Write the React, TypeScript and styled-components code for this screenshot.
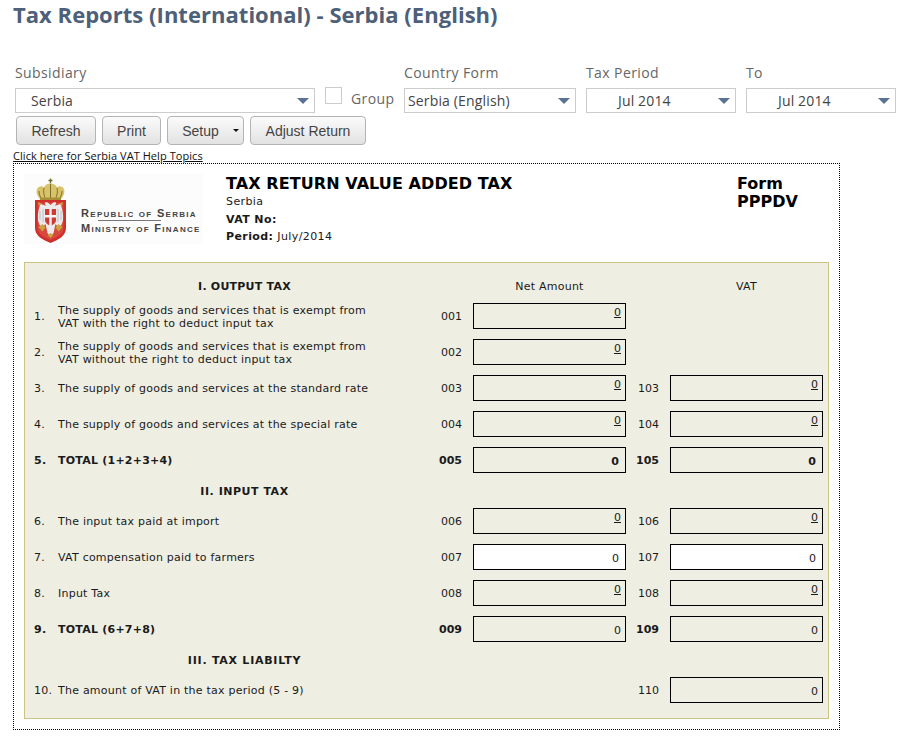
import React, { FC } from 'react';
import styled, { createGlobalStyle } from 'styled-components';

const GlobalStyle = createGlobalStyle`
  html, body {
    margin: 0;
    padding: 0;
    background: #fff;
  }
`;

const Page = styled.div`
  width: 904px;
  height: 741px;
  padding: 0 0 0 13px;
  box-sizing: border-box;
  font-family: "Open Sans", sans-serif;
`;

const Title = styled.h1`
  margin: 0;
  height: 61px;
  font-size: 22px;
  line-height: 27.98px;
  letter-spacing: 0.03px;
  font-weight: 700;
  color: #4d5f79;
`;

const Filters = styled.div`
  display: flex;
  align-items: flex-start;
  padding-left: 2px;
  height: 52px;
`;

const Filter = styled.div<{ $width: number; $gap?: number }>`
  width: ${p => p.$width}px;
  margin-right: ${p => p.$gap ?? 10}px;
`;

const FilterLabel = styled.div`
  font-size: 14px;
  line-height: 20px;
  height: 27px;
  padding-top: 2px;
  box-sizing: border-box;
  letter-spacing: 0.4px;
  color: #666;
`;

const Select = styled.div<{ $pad: number }>`
  height: 25px;
  box-sizing: border-box;
  border: 1px solid #ccc;
  display: flex;
  align-items: center;
  justify-content: space-between;
  padding: 0 5px 0 ${p => p.$pad}px;
  font-size: 14px;
  letter-spacing: 0.15px;
  color: #444;
`;

const Arrow = styled.span`
  width: 0;
  height: 0;
  border-left: 6px solid transparent;
  border-right: 6px solid transparent;
  border-top: 6px solid #5a7196;
`;

const GroupBox = styled.div`
  display: flex;
  align-items: flex-start;
  width: 79px;
  padding-top: 26px;
`;

const Check = styled.span`
  width: 17px;
  height: 17px;
  box-sizing: border-box;
  border: 1px solid #ccc;
  margin-right: 9px;
`;

const GroupLabel = styled.span`
  font-size: 14px;
  line-height: 24px;
  letter-spacing: 0.4px;
  color: #666;
`;

const Buttons = styled.div`
  display: flex;
  gap: 6px;
  padding-left: 3px;
  margin-top: 3px;
`;

const Button = styled.button<{ $width: number }>`
  width: ${p => p.$width}px;
  height: 29px;
  padding: 0;
  display: flex;
  align-items: center;
  justify-content: center;
  border: 1px solid #b4b4b4;
  border-radius: 4px;
  background: linear-gradient(#fbfbfb, #e2e2e2);
  font-family: "Liberation Sans", Arial, sans-serif;
  font-size: 14px;
  color: #444;
`;

const Caret = styled.span`
  width: 0;
  height: 0;
  margin-left: 14px;
  margin-right: -10px;
  border-left: 3px solid transparent;
  border-right: 3px solid transparent;
  border-top: 3px solid #111;
`;

const HelpLink = styled.a`
  display: block;
  height: 15px;
  margin-top: 3px;
  font-size: 11px;
  line-height: 15px;
  letter-spacing: 0.06px;
  color: #111;
  text-decoration: underline;
`;

const Report = styled.div`
  width: 827px;
  height: 567px;
  box-sizing: border-box;
  border: 1px dotted #000;
  padding: 10px 10px 0;
  font-family: "DejaVu Sans", Verdana, sans-serif;
  font-size: 11px;
  letter-spacing: 0.23px;
  color: #1a1a1a;
`;

const Head = styled.div`
  display: flex;
  height: 88px;
`;

const Logo = styled.div`
  width: 179px;
  height: 70px;
  display: flex;
  align-items: flex-start;
  background: #fcfcfc;
  padding-left: 11px;
  box-sizing: border-box;
`;

const LogoText = styled.div`
  margin: 32px 0 0 15px;
  font-family: "Liberation Sans", Arial, sans-serif;
  font-size: 11px;
  font-weight: 700;
  font-variant: small-caps;
  letter-spacing: 1.3px;
  color: #444;
  white-space: nowrap;
`;

const LogoLine = styled.div`
  line-height: 14px;
`;

const LogoRule = styled.div`
  width: 63px;
  height: 1px;
  margin-left: 17px;
  background: #777;
`;

const HeadText = styled.div`
  width: 511px;
  margin-left: 23px;
  padding-top: 1px;
`;

const ReportTitle = styled.div`
  font-size: 16px;
  line-height: 18px;
  letter-spacing: 0.08px;
  font-weight: 700;
  color: #000;
`;

const HeadLine = styled.div`
  font-size: 11px;
  line-height: 17.5px;
  letter-spacing: 0.4px;
  &:first-of-type {
    margin-top: 5px;
  }
`;

const FormName = styled.div`
  font-size: 16px;
  line-height: 18px;
  letter-spacing: 0;
  font-weight: 700;
  color: #000;
  padding-top: 1px;
`;

const Panel = styled.div`
  width: 805px;
  height: 457px;
  box-sizing: border-box;
  border: 1px solid #cdc283;
  background: #efeee3;
  padding: 16px 5px 0 9px;
  display: flex;
  flex-direction: column;
  gap: 10px;
`;

const Row = styled.div`
  display: grid;
  grid-template-columns: 24px 383px 32px 153px 12px 32px 153px;
  align-items: center;
  min-height: 26px;
`;

const SectionRow = styled(Row)<{ $height: number }>`
  min-height: ${p => p.$height}px;
  height: ${p => p.$height}px;
  align-items: end;
`;

const SectionTitle = styled.div<{ $spacing?: number }>`
  grid-column: 1 / 3;
  text-align: center;
  padding-left: 14px;
  line-height: 13px;
  font-weight: 700;
  letter-spacing: ${p => p.$spacing ?? 0.23}px;
`;

const ColumnTitle = styled.div<{ $column: number }>`
  grid-column: ${p => p.$column};
  text-align: center;
  line-height: 13px;
`;

const Num = styled.div<{ $bold?: boolean }>`
  font-weight: ${p => (p.$bold ? 700 : 400)};
`;

const Desc = styled.div<{ $bold?: boolean; $wrapped?: boolean }>`
  line-height: 13px;
  ${p => (p.$wrapped ? 'height: 26px; box-sizing: border-box; padding-top: 1px;' : '')}
  font-weight: ${p => (p.$bold ? 700 : 400)};
`;

const Code = styled.div<{ $bold?: boolean; $column: number }>`
  grid-column: ${p => p.$column};
  font-weight: ${p => (p.$bold ? 700 : 400)};
  letter-spacing: 0;
  margin-left: ${p => (p.$bold ? -2 : 0)}px;
`;

type ValueKind = 'link' | 'plain' | 'input' | 'bold';

const Box = styled.div<{ $kind: ValueKind; $column: number }>`
  grid-column: ${p => p.$column};
  height: 26px;
  box-sizing: border-box;
  border: 1px solid #000;
  background: ${p => (p.$kind === 'input' ? '#fff' : 'transparent')};
  text-align: right;
  line-height: 14px;
  letter-spacing: 0;
  padding-top: ${p => (p.$kind === 'link' ? 2 : 7)}px;
  padding-right: ${p => (p.$kind === 'link' || p.$kind === 'plain' ? 4 : 6)}px;
  font-weight: ${p => (p.$kind === 'bold' ? 700 : 400)};
  text-decoration: ${p => (p.$kind === 'link' ? 'underline' : 'none')};
`;

const Crest = styled.svg`
  flex: none;
  margin-top: 4px;
`;

// coat of arms: crown over a red shield with the white eagle
const CrestIcon: FC = () => (
  <Crest width="31" height="65" viewBox="0 0 31 65">
    <path d="M15.500 0.500v5M13.500 2.500h4" stroke="#6f6a35" strokeWidth="1.300" />
    <path
      d="M5 21C1 17 0 10 5 8.500c1.500-.5 3 0 4 1 1-2.500 3.500-4 6.500-4s5.500 1.500 6.500 4c1-1 2.500-1.500 4-1C31 10 30 17 26 21z"
      fill="#d9c36a"
    />
    <path
      d="M9 10c-1 3 0 8 1.500 11M15.500 6v15M22 10c1 3 0 8-1.500 11M4 13c0 3 1 6 3 8M27 13c0 3-1 6-3 8"
      stroke="#7d6f2c"
      strokeWidth="1"
      fill="none"
    />
    <path d="M5 19.500h21v2.500H5z" fill="#a98f38" />
    <path d="M0 22h31v28c0 8-8 12-15.500 15C8 62 0 58 0 50z" fill="#cf2f2b" />
    <path d="M2.500 24.500h26V50c0 6-6 9-13 12-7-3-13-6-13-12z" fill="#d9473f" />
    <path
      d="M15.500 27c-2-2-3-3-5-3-1 1-.5 3 1 3.500C9 28 7 26 5.500 26 3.500 31 2.500 36 3 42c.5 3 2 6 4 8l3.500-4 2 9 3 4 3-4 2-9L24 50c2-2 3.500-5 4-8 .5-6-.5-11-2.500-16-1.500 0-3.500 2-6 1.500 1.500-.5 2-2.500 1-3.500-2 0-3 1-5 3z"
      fill="#ebebeb"
    />
    <path
      d="M5 33v9M8 31v13M23 31v13M26 33v9"
      stroke="#bdbdbd"
      strokeWidth="1"
      fill="none"
    />
    <path d="M10 31h11v11c0 3-2.500 4.500-5.500 6-3-1.500-5.500-3-5.500-6z" fill="#d03a35" />
    <path d="M14.300 31h2.400v6H21v2.400h-4.300V48h-2.400v-8.600H10V37h4.300z" fill="#f4f4f4" />
    <path
      d="M3.500 49l4-3 3 3.500-3 4zM27.500 49l-4-3-3 3.500 3 4zM12.500 57l3-2 3 2-3 3z"
      fill="#c9a53f"
    />
    <path d="M3 24l3.500 1.500L4 28zM28 24l-3.500 1.500L27 28z" fill="#c9a53f" />
  </Crest>
);

type LineProps = {
  no: string;
  label: React.ReactNode;
  bold?: boolean;
  wrapped?: boolean;
  a?: string;
  aKind?: ValueKind;
  b?: string;
  bKind?: ValueKind;
};

const Line: FC<LineProps> = ({ no, label, bold, wrapped, a, aKind = 'link', b, bKind = 'link' }) => (
  <Row>
    <Num $bold={bold}>{no}</Num>
    <Desc $bold={bold} $wrapped={wrapped}>{label}</Desc>
    {a && <Code $bold={bold} $column={3}>{a}</Code>}
    {a && <Box $kind={aKind} $column={4}>0</Box>}
    {b && <Code $bold={bold} $column={6}>{b}</Code>}
    {b && <Box $kind={bKind} $column={7}>0</Box>}
  </Row>
);

const App: FC = () => (
  <Page>
    <GlobalStyle />
    <Title>Tax Reports (International) - Serbia (English)</Title>
    <Filters>
      <Filter $width={300}>
        <FilterLabel>Subsidiary</FilterLabel>
        <Select $pad={15}>Serbia<Arrow /></Select>
      </Filter>
      <GroupBox>
        <Check />
        <GroupLabel>Group</GroupLabel>
      </GroupBox>
      <Filter $width={172}>
        <FilterLabel>Country Form</FilterLabel>
        <Select $pad={3}>Serbia (English)<Arrow /></Select>
      </Filter>
      <Filter $width={150}>
        <FilterLabel>Tax Period</FilterLabel>
        <Select $pad={31}>Jul 2014<Arrow /></Select>
      </Filter>
      <Filter $width={150} $gap={0}>
        <FilterLabel>To</FilterLabel>
        <Select $pad={31}>Jul 2014<Arrow /></Select>
      </Filter>
    </Filters>
    <Buttons>
      <Button $width={80}>Refresh</Button>
      <Button $width={59}>Print</Button>
      <Button $width={77}>Setup<Caret /></Button>
      <Button $width={116}>Adjust Return</Button>
    </Buttons>
    <HelpLink>Click here for Serbia VAT Help Topics</HelpLink>
    <Report>
      <Head>
        <Logo>
          <CrestIcon />
          <LogoText>
            <LogoLine>Republic of Serbia</LogoLine>
            <LogoRule />
            <LogoLine>Ministry of Finance</LogoLine>
          </LogoText>
        </Logo>
        <HeadText>
          <ReportTitle>TAX RETURN VALUE ADDED TAX</ReportTitle>
          <HeadLine>Serbia</HeadLine>
          <HeadLine><b>VAT No:</b></HeadLine>
          <HeadLine><b>Period:</b> July/2014</HeadLine>
        </HeadText>
        <FormName>Form<br />PPPDV</FormName>
      </Head>
      <Panel>
        <SectionRow $height={14}>
          <SectionTitle>I. OUTPUT TAX</SectionTitle>
          <ColumnTitle $column={4}>Net Amount</ColumnTitle>
          <ColumnTitle $column={7}>VAT</ColumnTitle>
        </SectionRow>
        <Line
          no="1."
          wrapped
          label={<>The supply of goods and services that is exempt from<br />VAT with the right to deduct input tax</>}
          a="001"
        />
        <Line
          no="2."
          wrapped
          label={<>The supply of goods and services that is exempt from<br />VAT without the right to deduct input tax</>}
          a="002"
        />
        <Line no="3." label="The supply of goods and services at the standard rate" a="003" b="103" />
        <Line no="4." label="The supply of goods and services at the special rate" a="004" b="104" />
        <Line no="5." label="TOTAL (1+2+3+4)" bold a="005" aKind="bold" b="105" bKind="bold" />
        <SectionRow $height={15}>
          <SectionTitle $spacing={0.53}>II. INPUT TAX</SectionTitle>
        </SectionRow>
        <Line no="6." label="The input tax paid at import" a="006" b="106" />
        <Line no="7." label="VAT compensation paid to farmers" a="007" aKind="input" b="107" bKind="input" />
        <Line no="8." label="Input Tax" a="008" b="108" />
        <Line no="9." label="TOTAL (6+7+8)" bold a="009" aKind="plain" b="109" bKind="plain" />
        <SectionRow $height={15}>
          <SectionTitle $spacing={0.75}>III. TAX LIABILTY</SectionTitle>
        </SectionRow>
        <Line no="10." label="The amount of VAT in the tax period (5 - 9)" b="110" bKind="plain" />
      </Panel>
    </Report>
  </Page>
);

export default App;
